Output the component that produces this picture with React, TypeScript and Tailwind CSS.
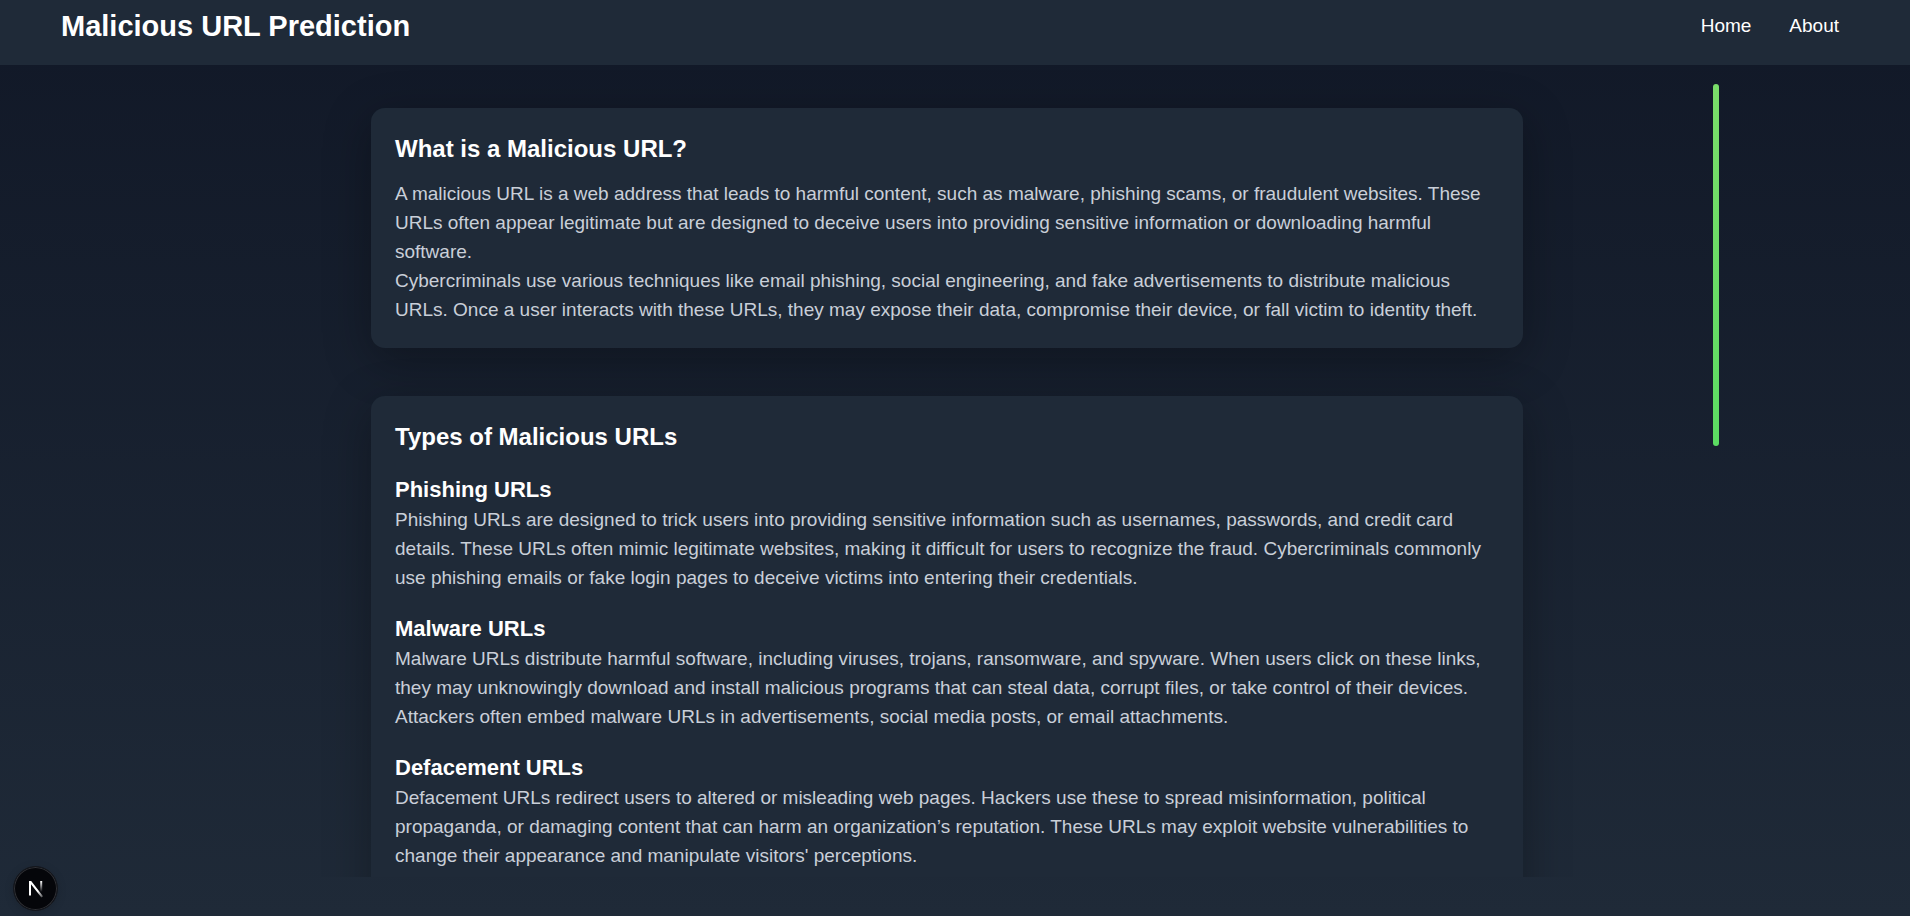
import type { ReactNode } from "react";

const urlTypes = [
  {
    title: "Phishing URLs",
    text: "Phishing URLs are designed to trick users into providing sensitive information such as usernames, passwords, and credit card details. These URLs often mimic legitimate websites, making it difficult for users to recognize the fraud. Cybercriminals commonly use phishing emails or fake login pages to deceive victims into entering their credentials.",
  },
  {
    title: "Malware URLs",
    text: "Malware URLs distribute harmful software, including viruses, trojans, ransomware, and spyware. When users click on these links, they may unknowingly download and install malicious programs that can steal data, corrupt files, or take control of their devices. Attackers often embed malware URLs in advertisements, social media posts, or email attachments.",
  },
  {
    title: "Defacement URLs",
    text: "Defacement URLs redirect users to altered or misleading web pages. Hackers use these to spread misinformation, political propaganda, or damaging content that can harm an organization’s reputation. These URLs may exploit website vulnerabilities to change their appearance and manipulate visitors' perceptions.",
  },
];

function Card({ title, children }: { title: string; children: ReactNode }) {
  return (
    <section className="shrink-0 rounded-[14px] bg-[#1f2a38] p-6 shadow-[0_12px_48px_rgba(0,0,0,0.3)]">
      <h2 className="text-[24px] leading-[33px] font-bold text-white">{title}</h2>
      {children}
    </section>
  );
}

function DevBadge() {
  return (
    <button
      type="button"
      aria-label="Open Next.js Dev Tools"
      className="fixed bottom-[5px] left-[13px] flex size-[45px] items-center justify-center rounded-full border border-[#15181e] bg-[#05060a] shadow-[inset_0_0_0_1px_#303136,0_2px_10px_rgba(0,0,0,0.15)]"
    >
      <svg width="16" height="18" viewBox="0 0 16 18" fill="none" aria-hidden="true">
        <defs>
          <linearGradient id="stem" x1="13" y1="1" x2="13" y2="12" gradientUnits="userSpaceOnUse">
            <stop stopColor="#fff" />
            <stop offset="1" stopColor="#fff" stopOpacity="0" />
          </linearGradient>
          <linearGradient id="slash" x1="10" y1="11" x2="15" y2="18" gradientUnits="userSpaceOnUse">
            <stop stopColor="#fff" />
            <stop offset="1" stopColor="#fff" stopOpacity="0.2" />
          </linearGradient>
        </defs>
        <path d="M1 1h2.2l11.8 15.2-1.6 1.3L3 4.2v11.3H1z" fill="url(#slash)" />
        <path d="M12.2 1h2v11h-2z" fill="url(#stem)" />
      </svg>
    </button>
  );
}

export default function App() {
  return (
    <div className="flex h-screen flex-col overflow-hidden bg-linear-to-b from-[#111827] to-[#1f2a38] font-['Liberation_Sans',Arial,sans-serif] text-[19px] leading-[29px]">
      <header className="flex shrink-0 items-center justify-between bg-[#1f2a38] px-[61px] pt-2 pb-[21px] text-white">
        <h1 className="text-[29px] leading-9 font-bold">Malicious URL Prediction</h1>
        <nav className="flex gap-[38px] pr-[10px] pb-[2px]">
          <a href="#home">Home</a>
          <a href="#about">About</a>
        </nav>
      </header>

      <main className="relative min-h-0 flex-1 overflow-hidden pt-[43px] pr-4">
        <div className="mx-auto flex max-w-6xl flex-col gap-12 text-[#c9cfd8]">
          <Card title="What is a Malicious URL?">
            <div className="mt-[14px]">
              <p>
                A malicious URL is a web address that leads to harmful content, such as malware, phishing
                scams, or fraudulent websites. These URLs often appear legitimate but are designed to
                deceive users into providing sensitive information or downloading harmful software.
              </p>
              <p>
                Cybercriminals use various techniques like email phishing, social engineering, and fake
                advertisements to distribute malicious URLs. Once a user interacts with these URLs, they
                may expose their data, compromise their device, or fall victim to identity theft.
              </p>
            </div>
          </Card>

          <Card title="Types of Malicious URLs">
            <div className="mt-[21px] flex flex-col gap-[21px] pb-10">
              {urlTypes.map((type) => (
                <article key={type.title}>
                  <h3 className="text-[22px] leading-[31px] font-bold text-white">{type.title}</h3>
                  <p>{type.text}</p>
                </article>
              ))}
            </div>
          </Card>
        </div>

        <div
          aria-hidden="true"
          className="absolute top-[19px] right-[191px] h-[362px] w-[6px] rounded-full bg-linear-to-b from-[#7add69] to-[#5bdc62]"
        />
      </main>

      <footer className="h-[39px] shrink-0" />
      <DevBadge />
    </div>
  );
}
